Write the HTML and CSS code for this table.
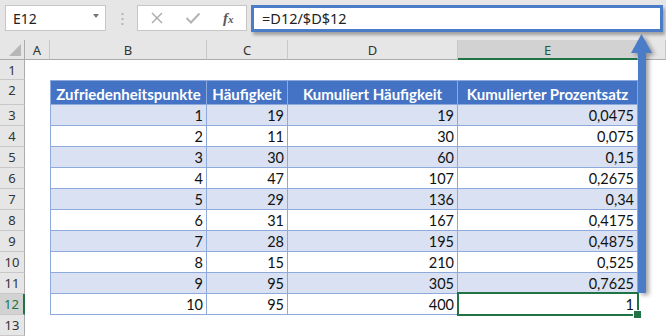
FILE: index.html
```html
<!DOCTYPE html>
<html lang="de">
<head>
    <meta charset="UTF-8">
    <title>Kumulierter Prozentsatz</title>
    <link rel="stylesheet" href="styles.css">
</head>
<body>
    <div class="toolbar">
        <div class="name-box"><span>E12</span><span class="caret"></span></div>
        <svg class="grip" width="3" height="12" viewBox="0 0 3 12">
            <rect x="0.5" y="0" width="2" height="2" fill="#b5b5b5"/>
            <rect x="0.5" y="5" width="2" height="2" fill="#b5b5b5"/>
            <rect x="0.5" y="10" width="2" height="2" fill="#b5b5b5"/>
        </svg>
        <div class="fx-buttons">
            <svg class="icon" width="14" height="14" viewBox="0 0 14 14">
                <path d="M2 2 L12 12 M12 2 L2 12" stroke="#a9a9a9" stroke-width="1.4" fill="none"/>
            </svg>
            <svg class="icon" width="16" height="14" viewBox="0 0 16 14">
                <path d="M1.5 7 L6 11.5 L14.5 2.5" stroke="#b3b3b3" stroke-width="2" fill="none"/>
            </svg>
            <span class="fx"><i>f</i><span>x</span></span>
        </div>
        <div class="formula">=D12/$D$12</div>
    </div>

    <div class="sheet">
        <div class="corner"></div>
        <div class="col">A</div>
        <div class="col">B</div>
        <div class="col">C</div>
        <div class="col">D</div>
        <div class="col sel">E</div>
        <div class="col"></div>

        <div class="num">1</div>
        <div class="cell"></div><div class="cell"></div><div class="cell"></div><div class="cell"></div><div class="cell"></div><div class="cell"></div>

        <div class="num">2</div>
        <div class="cell"></div>
        <div class="th first">Zufriedenheitspunkte</div>
        <div class="th">Häufigkeit</div>
        <div class="th">Kumuliert Häufigkeit</div>
        <div class="th">Kumulierter Prozentsatz</div>
        <div class="cell"></div>

        <div class="num">3</div>
        <div class="cell"></div>
        <div class="td band first">1</div><div class="td band">19</div><div class="td band">19</div><div class="td band">0,0475</div>
        <div class="cell"></div>

        <div class="num">4</div>
        <div class="cell"></div>
        <div class="td first">2</div><div class="td">11</div><div class="td">30</div><div class="td">0,075</div>
        <div class="cell"></div>

        <div class="num">5</div>
        <div class="cell"></div>
        <div class="td band first">3</div><div class="td band">30</div><div class="td band">60</div><div class="td band">0,15</div>
        <div class="cell"></div>

        <div class="num">6</div>
        <div class="cell"></div>
        <div class="td first">4</div><div class="td">47</div><div class="td">107</div><div class="td">0,2675</div>
        <div class="cell"></div>

        <div class="num">7</div>
        <div class="cell"></div>
        <div class="td band first">5</div><div class="td band">29</div><div class="td band">136</div><div class="td band">0,34</div>
        <div class="cell"></div>

        <div class="num">8</div>
        <div class="cell"></div>
        <div class="td first">6</div><div class="td">31</div><div class="td">167</div><div class="td">0,4175</div>
        <div class="cell"></div>

        <div class="num">9</div>
        <div class="cell"></div>
        <div class="td band first">7</div><div class="td band">28</div><div class="td band">195</div><div class="td band">0,4875</div>
        <div class="cell"></div>

        <div class="num">10</div>
        <div class="cell"></div>
        <div class="td first">8</div><div class="td">15</div><div class="td">210</div><div class="td">0,525</div>
        <div class="cell"></div>

        <div class="num">11</div>
        <div class="cell"></div>
        <div class="td band first">9</div><div class="td band">95</div><div class="td band">305</div><div class="td band">0,7625</div>
        <div class="cell"></div>

        <div class="num sel">12</div>
        <div class="cell"></div>
        <div class="td first">10</div><div class="td">95</div><div class="td">400</div><div class="td active">1</div>
        <div class="cell"></div>

        <div class="num">13</div>
        <div class="cell"></div><div class="cell"></div><div class="cell"></div><div class="cell"></div><div class="cell"></div><div class="cell"></div>
    </div>

    <!-- arrow pointing from the result column up to the formula -->
    <svg class="arrow" width="30" height="270" viewBox="0 0 30 270">
        <polygon points="13.5,4 24,23 3,23" fill="#4a7cc7"/>
        <rect x="10" y="22" width="8" height="241" fill="#4a7cc7"/>
    </svg>
</body>
</html>
```

FILE: styles.css
```css
* {
    box-sizing: border-box;
}
body {
    margin: 0;
    width: 666px;
    height: 336px;
    overflow: hidden;
    position: relative;
    background: #fff;
    font-family: "Noto Sans", "Open Sans", sans-serif;
    color: #222;
}

/* formula bar */
.toolbar {
    height: 40px;
    background: #e6e6e6;
    display: flex;
    align-items: flex-start;
    padding: 5px 0 0 5px;
}
.name-box {
    width: 101px;
    height: 26px;
    background: #fff;
    border: 1px solid #c6c6c6;
    display: flex;
    align-items: center;
    justify-content: space-between;
    padding: 0 6px 0 7px;
    font-size: 14px;
}
.caret {
    width: 0;
    height: 0;
    border-left: 3px solid transparent;
    border-right: 3px solid transparent;
    border-top: 4px solid #777;
    margin-top: -4px;
}
.grip {
    margin: 8px 0 0 15px;
}
.fx-buttons {
    margin-left: 13px;
    width: 110px;
    height: 26px;
    background: #fff;
    border: 1px solid #c6c6c6;
    display: flex;
    align-items: center;
    padding-left: 12px;
}
.fx-buttons .icon:nth-child(2) {
    margin-left: 21px;
}
.fx {
    margin-left: 22px;
    font-family: "Liberation Serif", serif;
    font-weight: bold;
    color: #595959;
    font-size: 15px;
}
.fx span {
    font-size: 11px;
    font-style: italic;
}
.formula {
    margin-left: 4px;
    width: 412px;
    height: 27px;
    background: #fff;
    border: 3px solid #4a7cc7;
    box-shadow: 2px 3px 3px rgba(0, 0, 0, 0.3);
    padding: 0 0 0 8px;
    font-size: 14.5px;
    line-height: 20px;
}

/* worksheet */
.sheet {
    display: grid;
    grid-template-columns: 25px 25px 157px 81px 170px 180px 1fr;
    grid-template-rows: 20px 20px 25px repeat(11, 21px);
}
.corner, .col {
    background: #e6e6e6;
    border-bottom: 1px solid #ababab;
    border-right: 1px solid #c8c8c8;
}
.corner {
    position: relative;
    border-right-color: #ababab;
}
.corner::after {
    content: "";
    position: absolute;
    right: 3px;
    bottom: 3px;
    border-left: 12px solid transparent;
    border-bottom: 12px solid #b7b7b7;
}
.col {
    font-size: 13px;
    text-align: center;
    line-height: 20px;
    color: #333;
}
.col.sel {
    background: #d2d2d2;
    border-bottom: 2px solid #217346;
    color: #1e5c3c;
}
.num {
    background: #e6e6e6;
    border-right: 1px solid #ababab;
    border-bottom: 1px solid #c8c8c8;
    font-size: 13px;
    text-align: center;
    line-height: 20px;
    color: #333;
}
.num.sel {
    background: #d2d2d2;
    border-right: 2px solid #217346;
    color: #217346;
}
.cell {
    background: #fff;
}

/* table */
.th, .td {
    font-family: Lato, "Open Sans", sans-serif;
    font-size: 14.5px;
    border-right: 1px solid #8ea9db;
    border-bottom: 1px solid #8ea9db;
}
.th {
    background: #4472c4;
    color: #fff;
    font-size: 15px;
    font-weight: bold;
    border-top: 1px solid #8ea9db;
    display: flex;
    align-items: center;
    justify-content: center;
    padding-top: 2px;
    white-space: nowrap;
}
.td {
    text-align: right;
    padding-right: 3px;
    line-height: 21px;
    color: #111;
}
.td.band {
    background: #d9e1f2;
}
.first {
    border-left: 1px solid #8ea9db;
}
.td.active {
    position: relative;
}
.td.active::after {
    content: "";
    position: absolute;
    top: -2px;
    left: -1px;
    right: -2px;
    bottom: -2px;
    border: 2px solid #217346;
}
.td.active::before {
    content: "";
    position: absolute;
    right: -5px;
    bottom: -5px;
    width: 7px;
    height: 7px;
    background: #217346;
    border: 1px solid #fff;
    z-index: 1;
}

.arrow {
    position: absolute;
    left: 628px;
    top: 30px;
    filter: drop-shadow(3px 2px 2px rgba(0, 0, 0, 0.35));
}
```
